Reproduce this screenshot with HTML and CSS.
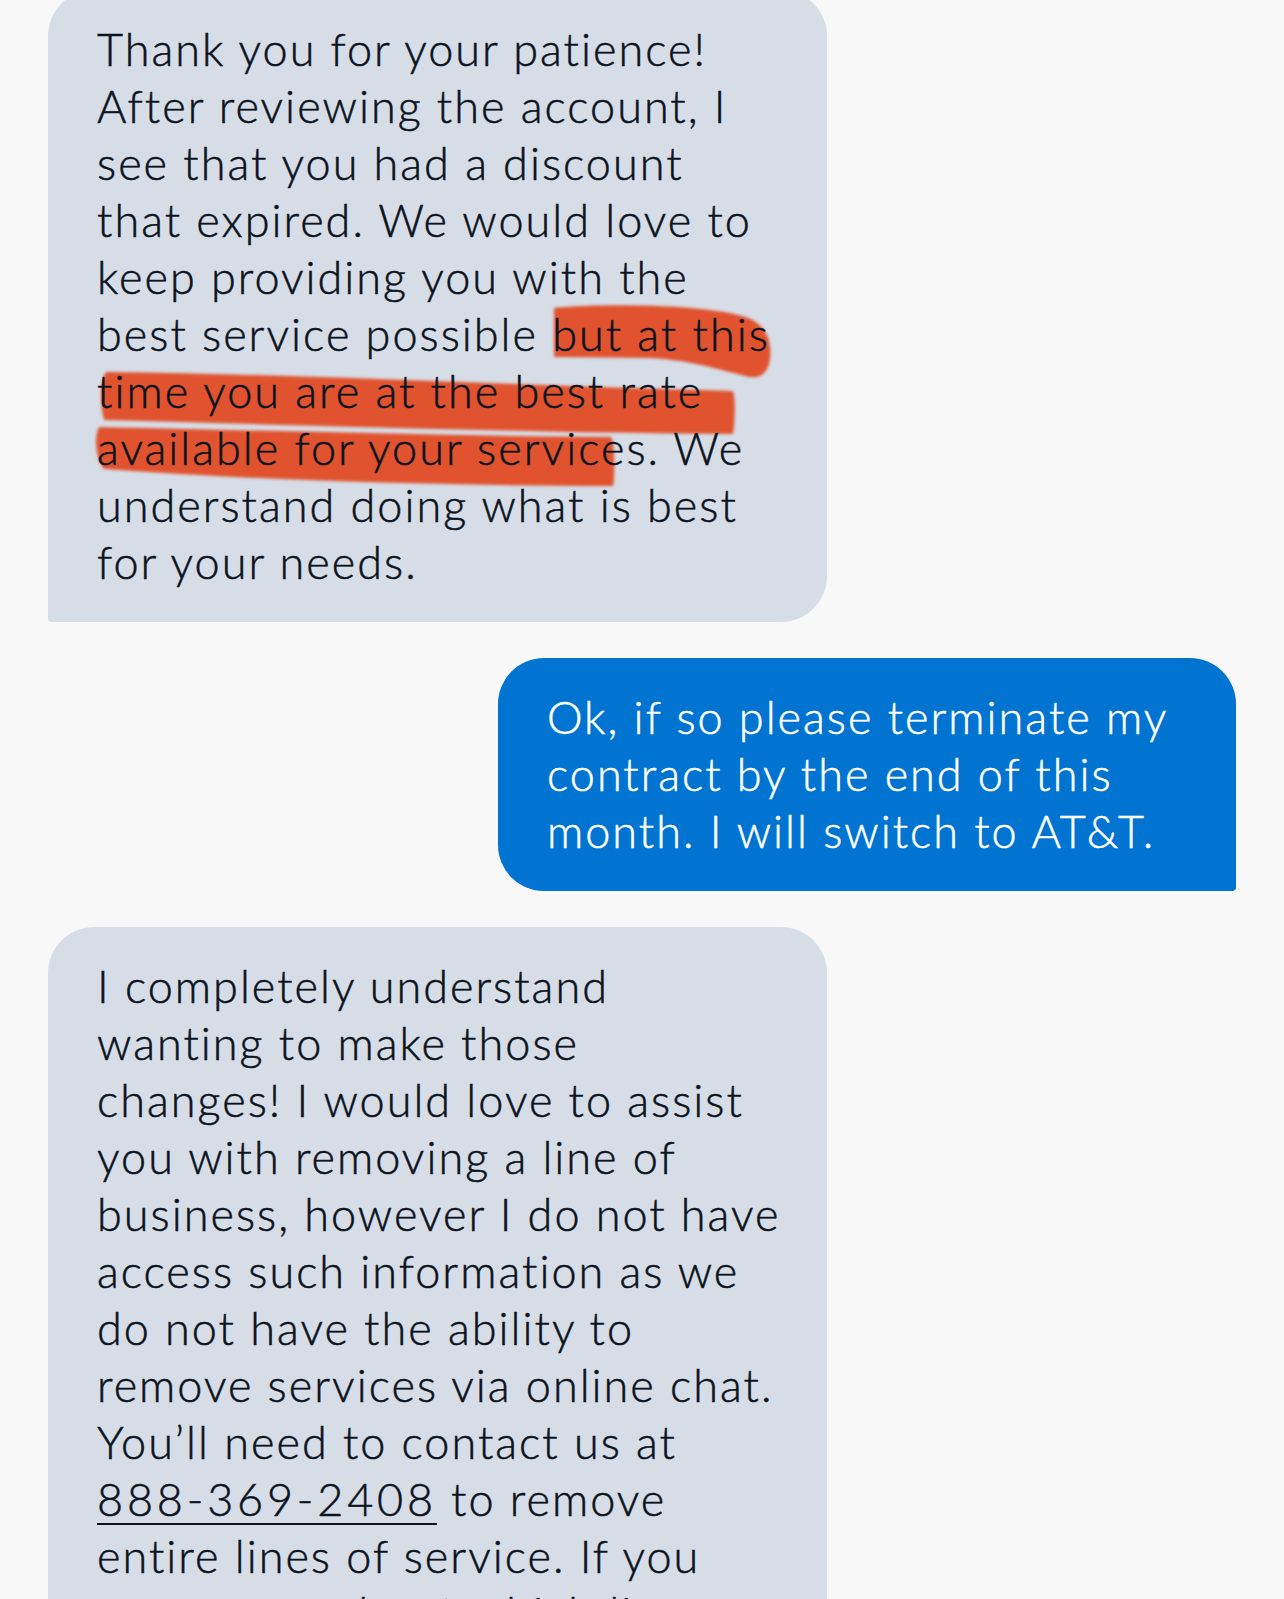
FILE: index.html
```html
<!DOCTYPE html>
<html lang="en">
<head>
    <meta charset="UTF-8">
    <meta name="viewport" content="width=device-width, initial-scale=1.0">
    <title>Chat</title>
    <link rel="stylesheet" href="styles.css">
</head>
<body>
    <div class="chat">
        <div class="bubble bubble-in first">
            <!-- highlighter marks drawn over the screenshot -->
            <svg class="marker" viewBox="0 0 779 640" preserveAspectRatio="none">
                <defs>
                    <filter id="soft"><feGaussianBlur stdDeviation="1.6"/></filter>
                </defs>
                <g filter="url(#soft)" fill="#e0522f">
                    <path d="M506,318 C560,313 650,315 690,325 C718,331 724,349 722,369 C720,385 710,390 697,386 C672,380 642,370 602,368 L506,367 Z"/>
                    <path d="M58,382 C252,384 452,395 684,401 C689,402 686,443 685,444 C452,442 252,435 56,430 C52,415 52,392 58,382 Z"/>
                    <path d="M51,437 C202,440 402,446 563,447 C567,452 567,491 565,496 C402,496 202,490 56,479 C47,467 46,447 51,437 Z"/>
                </g>
            </svg>
            <p class="msg">Thank you for your patience!<br>After reviewing the account, I<br>see that you had a discount<br>that expired. We would love to<br>keep providing you with the<br>best service possible but at this<br>time you are at the best rate<br>available for your services. We<br>understand doing what is best<br>for your needs.</p>
        </div>

        <div class="bubble bubble-out">
            <p class="msg">Ok, if so please terminate my<br>contract by the end of this<br>month. I will switch to AT&amp;T.</p>
        </div>

        <div class="bubble bubble-in">
            <p class="msg">I completely understand<br>wanting to make those<br>changes! I would love to assist<br>you with removing a line of<br>business, however I do not have<br>access such information as we<br>do not have the ability to<br>remove services via online chat.<br>You’ll need to contact us at<br><a class="phone" href="tel:8883692408">888-369-2408</a> to remove<br>entire lines of service. If you<br>are unsure about which lines</p>
        </div>
    </div>
</body>
</html>
```

FILE: styles.css
```css
* {
    margin: 0;
    padding: 0;
    box-sizing: border-box;
}

body {
    background-color: #f8f8f8;
    font-family: Lato, 'Open Sans', sans-serif;
    color: #0b1320;
}

.chat {
    display: flex;
    flex-direction: column;
    gap: 36px;
    padding: 0 48px;
}

.bubble {
    position: relative;
    padding: 31px 30px 31px 49px;
}

.bubble-in {
    align-self: flex-start;
    width: 779px;
    background: #d7dde7;
    border-radius: 46px 46px 46px 4px;
}

.bubble-out {
    align-self: flex-end;
    width: 738px;
    background: #0074d0;
    color: white;
    border-radius: 46px 46px 4px 46px;
}

.first {
    margin-top: -10px;
}

.marker {
    position: absolute;
    top: 0;
    left: 0;
    width: 779px;
    height: 640px;
}

.msg {
    position: relative;
    font-size: 45px;
    font-weight: 300;
    line-height: 57px;
    letter-spacing: 2px;
    -webkit-text-stroke: 0.5px currentColor;
    font-variant-ligatures: none;
    white-space: nowrap;
}

.phone {
    color: inherit;
    letter-spacing: 3.8px;
    text-decoration: underline;
    text-decoration-thickness: 2px;
    text-underline-offset: 7px;
}
```
